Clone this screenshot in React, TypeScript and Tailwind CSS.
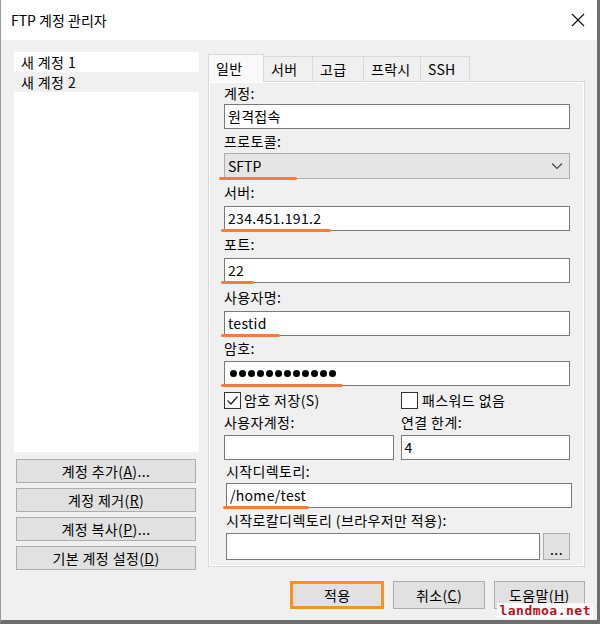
import React from "react";

const FONT = { fontFamily: '"Noto Sans CJK KR", "Noto Sans", sans-serif' };

function Mark({ w }: { w: number }) {
  return (
    <span
      className="pointer-events-none absolute bottom-[-2px] left-[-4px] h-[3px] rounded-full bg-[#f77b3b]"
      style={{ width: w }}
    />
  );
}

function Field({
  value,
  mark,
  className = "",
}: {
  value?: string;
  mark?: number;
  className?: string;
}) {
  return (
    <div
      className={`relative flex h-[25px] items-center border border-[#7a7a7a] bg-white px-[3px] text-[14px] tracking-[0.3px] text-black ${className}`}
    >
      {value}
      {mark ? <Mark w={mark} /> : null}
    </div>
  );
}

function Label({ text, h, className = "" }: { text: string; h: string; className?: string }) {
  return (
    <div className={`flex items-center text-[14px] tracking-[0.4px] text-black ${h} ${className}`}>
      {text}
    </div>
  );
}

function Btn({ children, className = "" }: { children: React.ReactNode; className?: string }) {
  return (
    <div
      className={`flex items-center justify-center border border-[#adadad] bg-[#e1e1e1] text-[14px] tracking-[0.4px] text-black ${className}`}
    >
      {children}
    </div>
  );
}

function Check({ on }: { on?: boolean }) {
  return (
    <div className="flex h-[17px] w-[17px] items-center justify-center border border-[#333] bg-white">
      {on && (
        <svg width="13" height="13" viewBox="0 0 13 13">
          <path d="M1.5 6.5 L5 10 L11.5 2.5" fill="none" stroke="#222" strokeWidth="1.3" />
        </svg>
      )}
    </div>
  );
}

const TABS = [
  { label: "일반", w: "w-[56px]" },
  { label: "서버", w: "w-[50px]" },
  { label: "고급", w: "w-[52px]" },
  { label: "프락시", w: "w-[58px]" },
  { label: "SSH", w: "w-[50px]" },
];

export default function App() {
  return (
    <div
      className="relative h-[624px] w-[600px] overflow-hidden border-b-[4px] border-l border-r-[3px] border-b-[#6e6e6e] border-l-[#9a9a9a] border-r-[#6e6e6e] bg-[#f0f0f0]"
      style={FONT}
    >
      {/* title bar */}
      <div className="flex h-10 items-center justify-between bg-white pl-[10px] pr-[12px]">
        <span className="text-[14px] text-black">FTP 계정 관리자</span>
        <svg width="14" height="14" viewBox="0 0 14 14">
          <path d="M1 1 L13 13 M13 1 L1 13" stroke="#111" strokeWidth="1.2" />
        </svg>
      </div>

      <div className="flex pl-[13px] pt-[12px]">
        {/* left column */}
        <div className="flex w-[185px] flex-col">
          <div className="flex h-[400px] flex-col bg-white text-[14px] tracking-[0.4px] text-black">
            <div className="flex h-[20px] items-center pl-[7px]">새 계정 1</div>
            <div className="flex h-[20px] items-center bg-[#f0f0f0] pl-[7px]">새 계정 2</div>
          </div>
          <div className="ml-[2px] mt-[7px] flex w-[180px] flex-col gap-[5px]">
            <Btn className="h-[24px]">
              계정 추가(<u>A</u>)...
            </Btn>
            <Btn className="h-[24px]">
              계정 제거(<u>R</u>)
            </Btn>
            <Btn className="h-[24px]">
              계정 복사(<u>P</u>)...
            </Btn>
            <Btn className="h-[24px]">
              기본 계정 설정(<u>D</u>)
            </Btn>
          </div>
        </div>

        {/* right column */}
        <div className="ml-[9px] flex w-[377px] flex-col pt-[2px]">
          <div className="flex h-[27px] items-end">
            {TABS.map((t, i) => (
              <div
                key={t.label}
                className={`flex items-center border border-b-0 border-[#d9d9d9] pl-[7px] text-[14px] tracking-[0.3px] text-black ${t.w} ${
                  i === 0
                    ? "relative z-10 -mb-px h-[28px] bg-[#f9f9f9]"
                    : "-ml-px h-[25px] bg-[#f0f0f0]"
                }`}
              >
                {t.label}
              </div>
            ))}
          </div>

          <div className="flex h-[486px] flex-col border border-[#d9d9d9] pl-[15px] pr-[14px] shadow-[inset_-1px_-1px_0_#ffffff,inset_1px_1px_0_#ffffff]">
            <Label text="계정:" h="h-[22px]" />
            <Field value="원격접속" />

            <Label text="프로토콜:" h="h-[24px]" />
            <div className="relative flex h-[26px] items-center justify-between border border-[#adadad] bg-[#e5e5e5] pl-[3px] pr-[6px] text-[14px] text-black">
              SFTP
              <svg width="12" height="8" viewBox="0 0 12 8">
                <path d="M1 1.5 L6 6.5 L11 1.5" fill="none" stroke="#444" strokeWidth="1.1" />
              </svg>
              <span className="pointer-events-none absolute bottom-[-2px] left-[-6px] h-[3px] w-[78px] rounded-full bg-[#f77b3b]" />
            </div>

            <Label text="서버:" h="h-[27px]" />
            <Field value="234.451.191.2" mark={110} />

            <Label text="포트:" h="h-[27px]" />
            <Field value="22" mark={33} />

            <Label text="사용자명:" h="h-[28px]" />
            <Field value="testid" mark={59} />

            <Label text="암호:" h="h-[25px]" />
            <div className="relative flex h-[25px] items-center gap-[2px] border border-[#7a7a7a] bg-white pl-[5px]">
              {Array.from({ length: 12 }).map((_, i) => (
                <span key={i} className="h-[7px] w-[7px] rounded-full bg-black" />
              ))}
              <Mark w={122} />
            </div>

            <div className="mt-[5px] flex h-[19px] items-center text-[14px] tracking-[0.4px] text-black">
              <div className="flex w-[177px] items-center gap-[3px]">
                <Check on />
                <span>암호 저장(S)</span>
              </div>
              <div className="flex items-center gap-[4px]">
                <Check />
                <span>패스워드 없음</span>
              </div>
            </div>

            <div className="flex h-[25px] items-center text-[14px] tracking-[0.4px] text-black">
              <span className="w-[177px]">사용자계정:</span>
              <span>연결 한계:</span>
            </div>
            <div className="flex">
              <Field className="w-[170px]" />
              <Field value="4" className="ml-[7px] w-[170px]" />
            </div>

            <Label text="시작디렉토리:" h="h-[23px]" className="pl-[2px]" />
            <Field value="/home/test" mark={86} className="ml-[2px] w-[346px]" />

            <Label text="시작로칼디렉토리 (브라우저만 적용):" h="h-[25px]" className="pl-[2px]" />
            <div className="flex">
              <Field className="ml-[2px] h-[27px] w-[314px]" />
              <Btn className="ml-[3px] h-[27px] w-[27px] items-end pb-[3px] leading-none">...</Btn>
            </div>
          </div>

          {/* bottom buttons */}
          <div className="mt-[14px] flex">
            <div className="ml-[82px] flex h-[28px] w-[95px] items-center justify-center border-[3px] border-[#f7931e] bg-[#e1e1e1] text-[14px] tracking-[0.4px] text-black">
              적용
            </div>
            <Btn className="ml-[9px] h-[28px] w-[92px]">
              취소(<u>C</u>)
            </Btn>
            <Btn className="ml-[9px] h-[28px] w-[92px]">
              도움말(<u>H</u>)
            </Btn>
          </div>
        </div>
      </div>

      <div
        className="absolute bottom-[2px] right-[4px] bg-white/80 px-[2px] text-[13px] font-bold leading-[15px] tracking-[0.5px] text-[#b3121b]"
        style={{ fontFamily: '"DejaVu Sans Mono", monospace' }}
      >
        landmoa.net
      </div>
    </div>
  );
}
